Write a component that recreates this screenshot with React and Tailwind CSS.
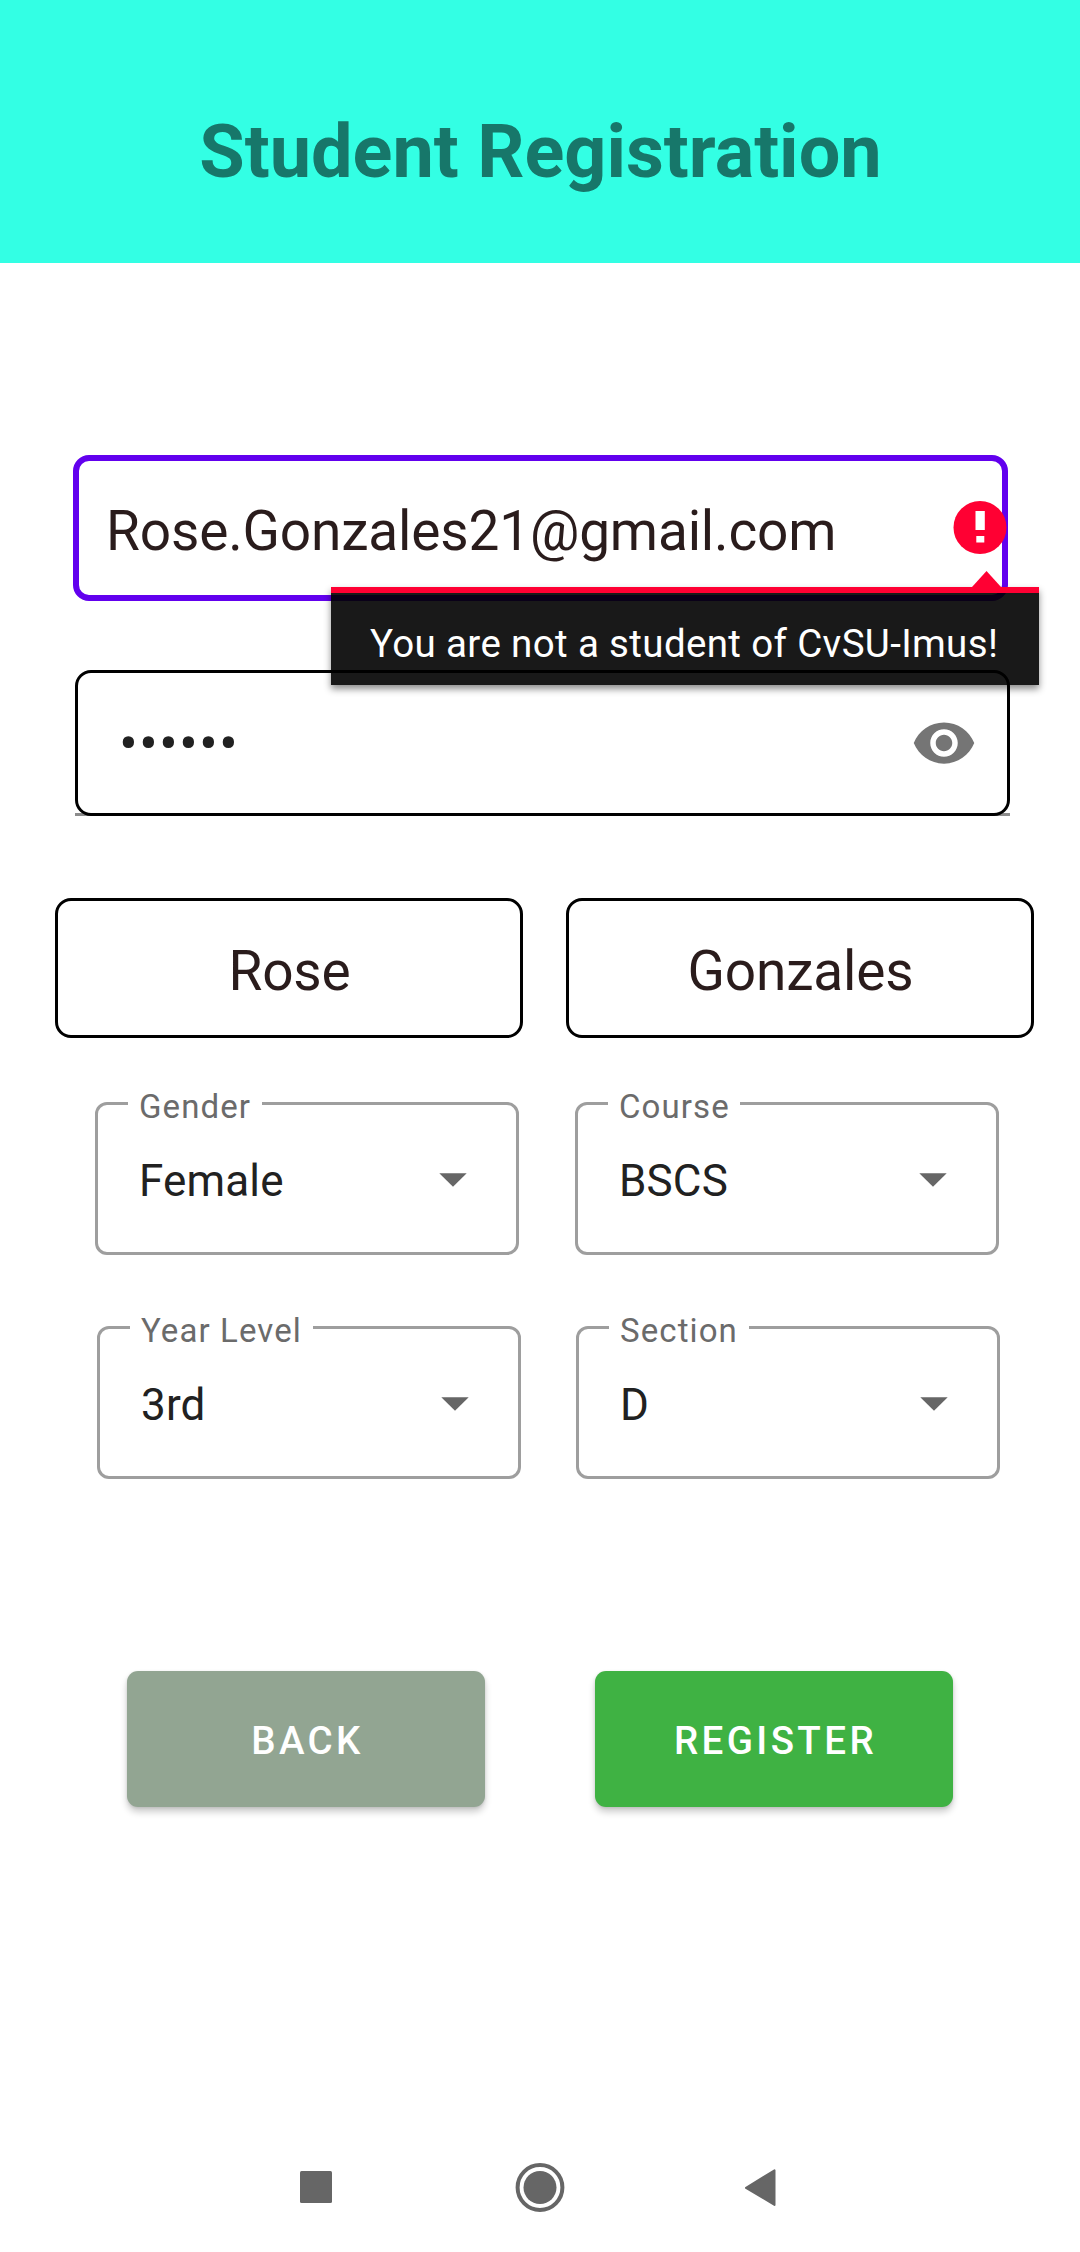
import React from "react";

function NameField({ value }) {
  return (
    <div className="h-[140px] w-[468px] rounded-2xl border-3 border-black pt-[30px] pl-[1px] text-center text-[55px] leading-[80px] tracking-[-0.17px] text-[#2a1c1c]">
      {value}
    </div>
  );
}

function SelectField({ label, value, notch }) {
  return (
    <div className="relative h-[153px] w-[424px] rounded-xl border-3 border-[#9e9e9e]">
      <span
        className={`absolute -top-[18px] left-[30px] h-[40px] bg-white pl-[11px] text-[33px] leading-[40px] tracking-[1.1px] whitespace-nowrap text-[#6b6b6b] ${notch}`}
      >
        {label}
      </span>
      <div className="flex items-center justify-between pt-[46px] pr-[49px] pl-[41px]">
        <span className="text-[44px] leading-[60px] tracking-[0.15px] text-[#212121]">{value}</span>
        <svg className="-mt-[2px] h-[14px] w-[28px]" viewBox="0 0 28 14">
          <path d="M0.3 0.2h27.4L14 13.8z" fill="#666" />
        </svg>
      </div>
    </div>
  );
}

function ActionButton({ children, color }) {
  return (
    <button
      className={`h-[136px] w-[358px] rounded-[11px] pt-[3px] pl-[3px] text-[38.5px] font-medium tracking-[3.4px] text-white shadow-[0_5px_7px_rgba(0,0,0,0.2),0_1px_3px_rgba(0,0,0,0.1)] ${color}`}
    >
      {children}
    </button>
  );
}

function ErrorPopup() {
  return (
    <div className="w-[708px]">
      <svg className="ml-[641px] block h-[16px] w-[29px]" viewBox="0 0 29 16">
        <path d="M0 16L14.5 0L29 16z" fill="#ff0033" />
      </svg>
      <div className="h-[98px] border-t-6 border-[#ff0033] bg-black/90 bg-clip-padding pt-[28px] pl-[39px] text-[38.5px] leading-[46px] tracking-[0.36px] whitespace-nowrap text-white shadow-[0_4px_7px_rgba(0,0,0,0.45)]">
        You are not a student of CvSU-Imus!
      </div>
    </div>
  );
}

export default function App() {
  return (
    <div className="flex h-[2252px] w-[1080px] flex-col overflow-hidden bg-white font-['Roboto',sans-serif]">
      <header className="h-[263px] bg-[#33ffe4] pt-[112px] pl-[1px] text-center text-[73.8px] leading-[80px] font-bold text-[#17776a]">
        Student Registration
      </header>

      <main className="flex-1">
        <div className="relative z-10 mt-[192px] ml-[73px] h-[146px] w-[935px] rounded-2xl border-6 border-[#6200ee]">
          <div className="pt-[30px] pl-[27px] text-[55px] leading-[80px] tracking-[-0.17px] text-[#2a1c1c]">
            Rose.Gonzales21@gmail.com
          </div>
          <svg className="absolute top-[40px] left-[874px] h-[54px] w-[54px]" viewBox="0 0 54 54">
            <circle cx="27" cy="26.5" r="26.5" fill="#ff0033" />
            <path d="M22.5 10h9.3v19h-9.3zM23.3 35h8v6.5h-8z" fill="#fff" />
          </svg>
          <div className="absolute top-[110px] left-[252px]">
            <ErrorPopup />
          </div>
        </div>

        <div className="mt-[69px] ml-[75px] h-[146px] w-[935px] border-b-3 border-[#8c8c8c]">
          <div className="flex h-[146px] items-center justify-between rounded-2xl border-3 border-black pr-[30px] pl-[41px]">
            <span className="pt-[2px] text-[56px] leading-[60px] tracking-[1.1px] text-[#212121]">••••••</span>
            <svg className="h-[66px] w-[66px]" viewBox="0 0 24 24" fill="#757575">
              <path d="M12 4.5C7 4.5 2.73 7.61 1 12c1.73 4.39 6 7.5 11 7.5s9.27-3.11 11-7.5c-1.73-4.39-6-7.5-11-7.5zM12 17c-2.76 0-5-2.24-5-5s2.24-5 5-5 5 2.24 5 5-2.24 5-5 5zm0-8c-1.66 0-3 1.34-3 3s1.34 3 3 3 3-1.34 3-3-1.34-3-3-3z" />
            </svg>
          </div>
        </div>

        <div className="mt-[82px] ml-[55px] flex gap-[43px]">
          <NameField value="Rose" />
          <NameField value="Gonzales" />
        </div>

        <div className="mt-[64px] ml-[95px] flex gap-[56px]">
          <SelectField label="Gender" value="Female" notch="w-[134px]" />
          <SelectField label="Course" value="BSCS" notch="w-[132px]" />
        </div>

        <div className="mt-[71px] ml-[97px] flex gap-[55px]">
          <SelectField label="Year Level" value="3rd" notch="w-[183px]" />
          <SelectField label="Section" value="D" notch="w-[140px]" />
        </div>

        <div className="mt-[192px] ml-[127px] flex gap-[110px]">
          <ActionButton color="bg-[#92a592]">BACK</ActionButton>
          <ActionButton color="bg-[#3fb243]">REGISTER</ActionButton>
        </div>
      </main>

      <nav className="flex h-[130px] items-center justify-between pr-[304px] pl-[300px]">
        <svg className="h-[32px] w-[32px]" viewBox="0 0 32 32">
          <rect width="32" height="32" rx="1.5" fill="#666" />
        </svg>
        <svg className="ml-[4px] h-[50px] w-[50px]" viewBox="0 0 50 50">
          <circle cx="25" cy="25.5" r="22.4" fill="none" stroke="#666" strokeWidth="4" />
          <circle cx="25" cy="25.5" r="16.5" fill="#666" />
        </svg>
        <svg className="h-[38px] w-[32px]" viewBox="0 0 32 38">
          <path d="M2 19.8L30.5 2.3v34.6z" fill="#666" stroke="#666" strokeWidth="2" strokeLinejoin="round" />
        </svg>
      </nav>
    </div>
  );
}
